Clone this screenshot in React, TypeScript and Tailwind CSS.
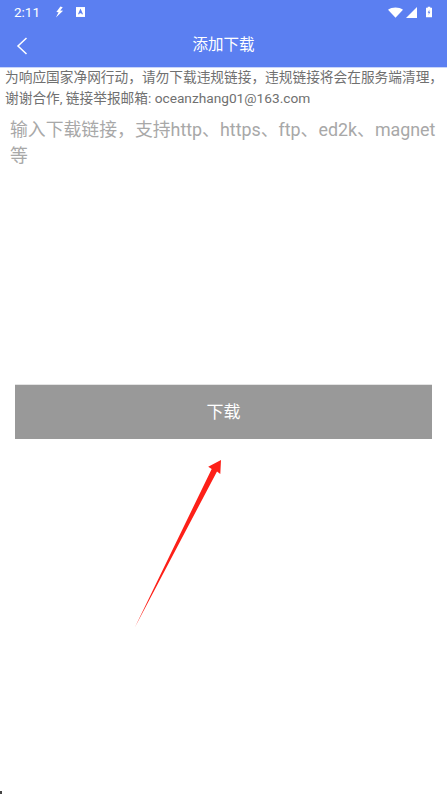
import React from 'react';

const FONT = "font-['Roboto','Noto_Sans_CJK_SC',sans-serif]";
const NOTICE = '为响应国家净网行动\uFF0C请勿下载违规链接\uFF0C违规链接将会在服务端清理\uFF0C谢谢合作, 链接举报邮箱: oceanzhang01@163.com';
const PLACEHOLDER = '输入下载链接\uFF0C支持http、https、ftp、ed2k、magnet';

function StatusBar() {
  return (
    <div className="h-6 flex items-center pl-[14px] pr-[15px] text-white">
      <span className="text-[13.5px] leading-none mt-[1px] w-[41px]">2:11</span>
      <svg className="w-[9px] h-[12px]" viewBox="0 0 10 12" fill="white">
        <path d="M6 0 L1.5 6 L4 6.2 L1 12 L9 4.5 L5.8 4.3 L8.6 0.6 Z" />
      </svg>
      <svg className="w-[9px] h-[10px] ml-[12px]" viewBox="0 0 10 11">
        <rect width="10" height="11" fill="white" />
        <path d="M5 1.5 L2.2 8 H3.6 L4.1 6.8 H5.9 L6.4 8 H7.8 Z" fill="#5b7ff1" />
      </svg>
      <div className="flex-1" />
      <svg className="w-[15px] h-[11px]" viewBox="0 0 16 11" fill="white">
        <path d="M0 2.6 C4.5 -0.8 11.5 -0.8 16 2.6 L8 11 Z" />
      </svg>
      <svg className="w-[11px] h-[11px] ml-[3px]" viewBox="0 0 11 11" fill="white">
        <path d="M11 0 V11 H0 Z" />
      </svg>
      <svg className="w-[6px] h-[12px] ml-[9px]" viewBox="0 0 7 12">
        <path d="M2 0 H5 V1 H7 V12 H0 V1 H2 Z" fill="white" />
        <path d="M4 3 L2 6.8 H3.3 L3 9.5 L5 5.6 H3.7 Z" fill="#5b7ff1" />
      </svg>
    </div>
  );
}

function Arrow() {
  return (
    <svg className="absolute left-[130px] top-[455px] w-[95px] h-[175px]" viewBox="0 0 95 175">
      <path d="M4.8 172.5 L81.7 14 L78.2 11.7 L91 5 L90.3 19 L87 16.5 Z" fill="#fd2018" />
    </svg>
  );
}

export default function App() {
  return (
    <div className={`relative h-[794px] w-full overflow-hidden bg-white ${FONT}`}>
      <div className="h-[68px] bg-[#5b7ff1] flex flex-col border-b border-[#c9d5f9]">
        <StatusBar />
        <div className="relative flex-1 flex items-center justify-center">
          <svg className="absolute left-[16px] top-[13px] w-[12px] h-[18px]" viewBox="0 0 12 18" fill="none" stroke="white" strokeWidth="1.5">
            <path d="M10.5 1 L2 9 L10.5 17" />
          </svg>
          <span className="text-white text-[15.5px] mt-[1px]">添加下载</span>
        </div>
      </div>

      <p className="-mt-px pl-[5px] pr-[2px] text-[13.7px] leading-[21px] text-[#707070]">{NOTICE}</p>

      <div className="h-[275px] pl-[10px] pr-[4px] pt-[8px]">
        <p className="text-[17.85px] leading-[26px] text-[#a8a8a8]">
          {PLACEHOLDER}
          <br />等
        </p>
      </div>

      <button className="mx-[15px] w-[417px] h-[55px] pt-px bg-[#999] border-t border-[#e4e4e4] text-white text-[17px] flex items-center justify-center">
        下载
      </button>

      <Arrow />
      <div className="absolute left-0 top-[791px] w-[2px] h-[3px] bg-[#444]" />
    </div>
  );
}
